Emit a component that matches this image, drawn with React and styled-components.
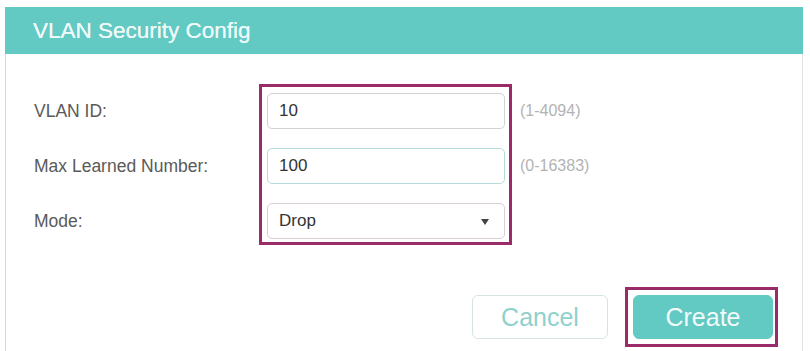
import React from "react";
import styled, { createGlobalStyle } from "styled-components";

const Global = createGlobalStyle`
  html, body { margin: 0; padding: 0; background: #ffffff; }
  body { font-family: "Liberation Sans", Arial, sans-serif; }
  * { box-sizing: border-box; }
`;

const Page = styled.div`
  width: 810px;
  height: 351px;
  padding: 7px 7px 0 5px;
  overflow: hidden;
`;

const Panel = styled.div`
  width: 798px;
  height: 344px;
  border-left: 1px solid #d9d9d9;
  border-right: 1px solid #e2e2e2;
  display: flex;
  flex-direction: column;
`;

const Header = styled.div`
  height: 47px;
  background: #63c9c3;
  display: flex;
  align-items: center;
  padding-left: 28px;
  margin-left: -1px;
  margin-right: -1px;
`;

const Title = styled.h1`
  margin: 0;
  font-size: 22.5px;
  font-weight: normal;
  color: #eefaf9;
  text-shadow: 0 0 0.6px #eefaf9;
`;

const Form = styled.div`
  display: flex;
  align-items: flex-start;
  margin-top: 30px;
  padding-left: 28px;
`;

const LabelColumn = styled.div`
  width: 225px;
  display: flex;
  flex-direction: column;
  gap: 19px;
  padding-top: 9px;
`;

const Label = styled.div`
  height: 36px;
  display: flex;
  align-items: center;
  font-size: 17.5px;
  color: #5a5a5a;
`;

const Highlight = styled.div`
  border: 3px solid #9a2a68;
  padding: ${(p) => p.$pad};
  display: flex;
  flex-direction: ${(p) => (p.$column ? "column" : "row")};
  gap: 19px;
`;

const Field = styled.div`
  position: relative;
  width: 238px;
  height: 36px;
  border: 1px solid ${(p) => p.$border || "#d2d2d2"};
  border-radius: 5px;
  background: #ffffff;
  display: flex;
  align-items: center;
  padding-left: 11px;
  font-size: 17px;
  color: #333333;
`;

const Arrow = styled.span`
  position: absolute;
  right: 15px;
  top: 15px;
  width: 0;
  height: 0;
  border-left: 4.5px solid transparent;
  border-right: 4.5px solid transparent;
  border-top: 6px solid #444444;
`;

const HintColumn = styled.div`
  display: flex;
  flex-direction: column;
  gap: 19px;
  padding-top: 9px;
  margin-left: 8px;
`;

const Hint = styled.div`
  height: 36px;
  display: flex;
  align-items: center;
  font-size: 16px;
  color: #b3b3b3;
`;

const Footer = styled.div`
  display: flex;
  justify-content: flex-end;
  align-items: center;
  gap: 17px;
  margin-top: 42px;
  padding-right: 24px;
`;

const Button = styled.button`
  width: ${(p) => p.$w}px;
  height: 44px;
  border-radius: 6px;
  font-family: "Liberation Sans", Arial, sans-serif;
  font-size: 25px;
  cursor: pointer;
  border: 1px solid ${(p) => (p.$primary ? "#63c9c3" : "#d6e3e2")};
  background: ${(p) => (p.$primary ? "#63c9c3" : "#ffffff")};
  color: ${(p) => (p.$primary ? "#f2fbfa" : "#8ed1cd")};
  padding: 0;
`;

export default function App() {
  return (
    <>
      <Global />
      <Page>
        <Panel>
          <Header>
            <Title>VLAN Security Config</Title>
          </Header>
          <Form>
            <LabelColumn>
              <Label>VLAN ID:</Label>
              <Label>Max Learned Number:</Label>
              <Label>Mode:</Label>
            </LabelColumn>
            <Highlight $column $pad="6px 4px 3px 5px">
              <Field>10</Field>
              <Field $border="#b5dcd9">100</Field>
              <Field $border="#d8cfd2">
                Drop
                <Arrow />
              </Field>
            </Highlight>
            <HintColumn>
              <Hint>(1-4094)</Hint>
              <Hint>(0-16383)</Hint>
            </HintColumn>
          </Form>
          <Footer>
            <Button $w={136}>Cancel</Button>
            <Highlight $pad="5px 2px 5px 5px">
              <Button $primary $w={140}>Create</Button>
            </Highlight>
          </Footer>
        </Panel>
      </Page>
    </>
  );
}
